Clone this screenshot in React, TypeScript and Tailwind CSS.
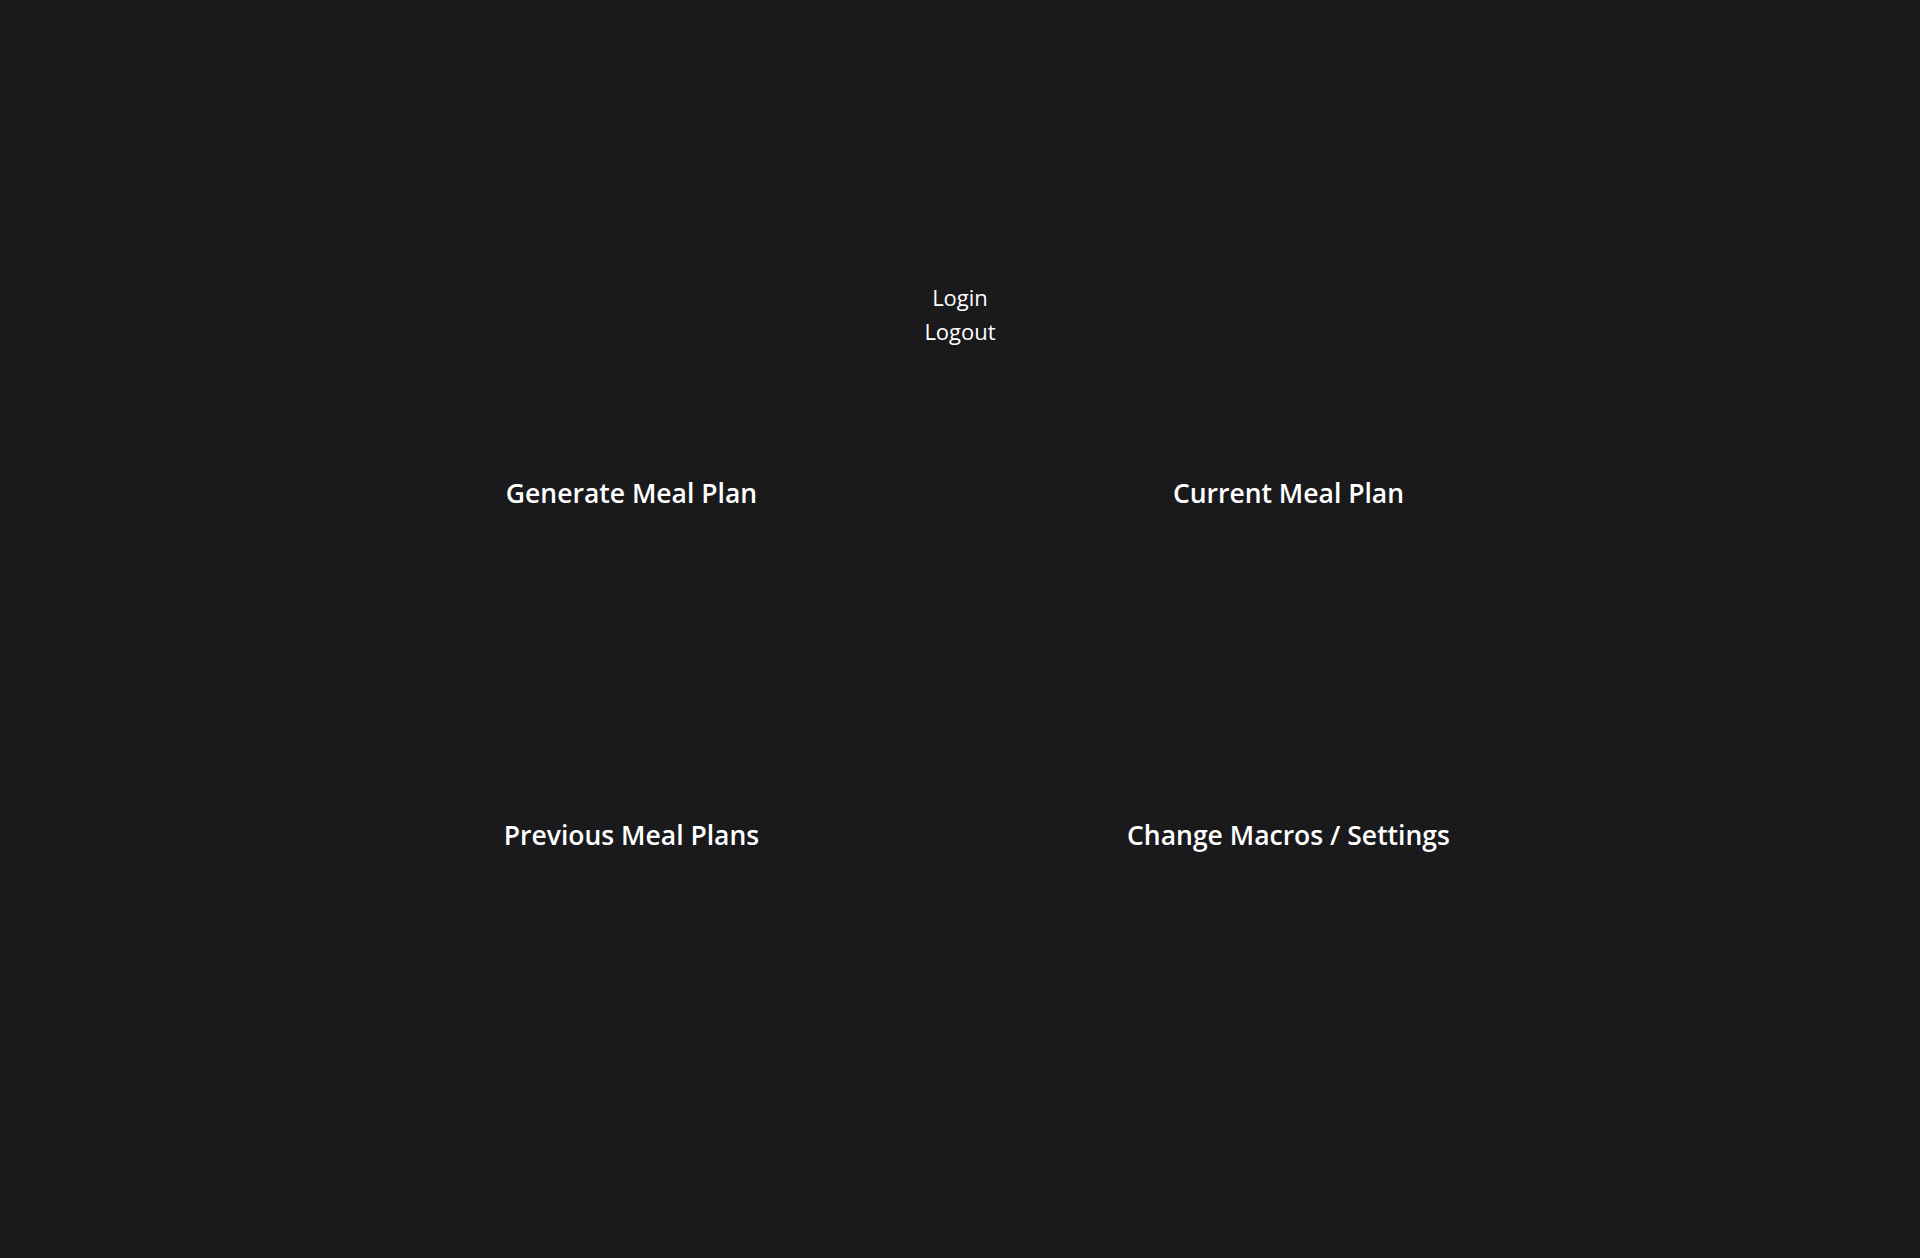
export default function App() {
  const cards = [
    'Generate Meal Plan',
    'Current Meal Plan',
    'Previous Meal Plans',
    'Change Macros / Settings',
  ];

  return (
    <div className="min-h-screen bg-[#1a1a1c] text-white font-['Open_Sans',sans-serif] flex flex-col items-center">
      {/* Auth links */}
      <nav className="pt-[280px] flex flex-col items-center text-[22px] leading-[34px]">
        <a className="cursor-pointer">Login</a>
        <a className="cursor-pointer">Logout</a>
      </nav>

      {/* Menu tiles */}
      <div className="mt-[127px] grid grid-cols-2 w-[1314px] auto-rows-[342px]">
        {cards.map((title) => (
          <div key={title} className="flex justify-center">
            <h2 className="text-[26.5px] leading-[36px] font-semibold">{title}</h2>
          </div>
        ))}
      </div>
    </div>
  );
}
